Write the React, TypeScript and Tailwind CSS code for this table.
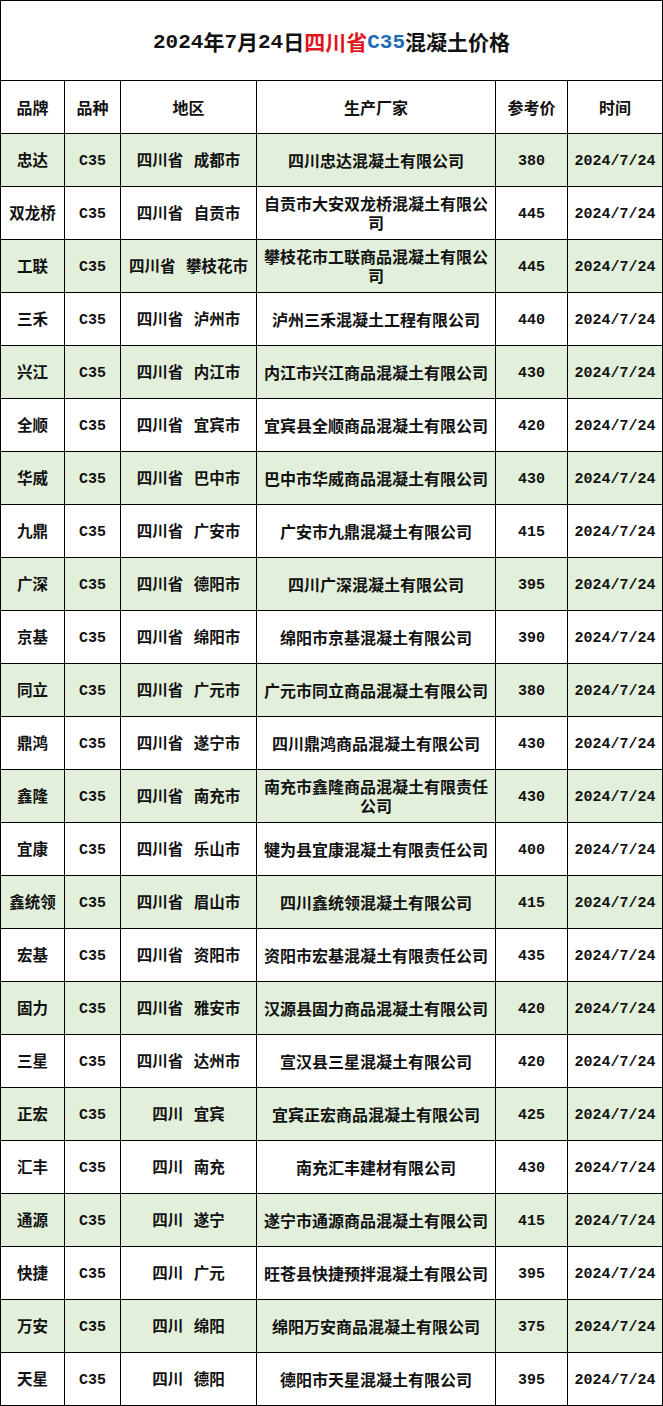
import React from "react";

type Row = [string, string, string, string];

const rows: Row[] = [
  ["忠达", "四川省 成都市", "四川忠达混凝土有限公司", "380"],
  ["双龙桥", "四川省 自贡市", "自贡市大安双龙桥混凝土有限公司", "445"],
  ["工联", "四川省 攀枝花市", "攀枝花市工联商品混凝土有限公司", "445"],
  ["三禾", "四川省 泸州市", "泸州三禾混凝土工程有限公司", "440"],
  ["兴江", "四川省 内江市", "内江市兴江商品混凝土有限公司", "430"],
  ["全顺", "四川省 宜宾市", "宜宾县全顺商品混凝土有限公司", "420"],
  ["华威", "四川省 巴中市", "巴中市华威商品混凝土有限公司", "430"],
  ["九鼎", "四川省 广安市", "广安市九鼎混凝土有限公司", "415"],
  ["广深", "四川省 德阳市", "四川广深混凝土有限公司", "395"],
  ["京基", "四川省 绵阳市", "绵阳市京基混凝土有限公司", "390"],
  ["同立", "四川省 广元市", "广元市同立商品混凝土有限公司", "380"],
  ["鼎鸿", "四川省 遂宁市", "四川鼎鸿商品混凝土有限公司", "430"],
  ["鑫隆", "四川省 南充市", "南充市鑫隆商品混凝土有限责任公司", "430"],
  ["宜康", "四川省 乐山市", "犍为县宜康混凝土有限责任公司", "400"],
  ["鑫统领", "四川省 眉山市", "四川鑫统领混凝土有限公司", "415"],
  ["宏基", "四川省 资阳市", "资阳市宏基混凝土有限责任公司", "435"],
  ["固力", "四川省 雅安市", "汉源县固力商品混凝土有限公司", "420"],
  ["三星", "四川省 达州市", "宣汉县三星混凝土有限公司", "420"],
  ["正宏", "四川 宜宾", "宜宾正宏商品混凝土有限公司", "425"],
  ["汇丰", "四川 南充", "南充汇丰建材有限公司", "430"],
  ["通源", "四川 遂宁", "遂宁市通源商品混凝土有限公司", "415"],
  ["快捷", "四川 广元", "旺苍县快捷预拌混凝土有限公司", "395"],
  ["万安", "四川 绵阳", "绵阳万安商品混凝土有限公司", "375"],
  ["天星", "四川 德阳", "德阳市天星混凝土有限公司", "395"],
];

const cjk = "font-['Noto_Sans_CJK_SC',sans-serif] font-bold text-[#111]";
const mono = "font-['Liberation_Mono',monospace] font-bold text-[15px] text-[#111] pt-[5px]";
const cell = "border-r border-b border-black flex items-center justify-center text-center h-[53px]";

export default function App() {
  return (
    <div className="w-[663px] min-h-[1406px] bg-white">
      <div className="border-t border-l border-black w-[663px]">
        <div className="h-[80px] border-r border-b border-black flex items-center justify-center font-bold text-[21px] text-[#111] pt-[2px]">
          <span className="font-['Liberation_Mono',monospace] pt-[3px]">2024</span>
          <span className="font-['Noto_Sans_CJK_SC',sans-serif]">年</span>
          <span className="font-['Liberation_Mono',monospace] pt-[3px]">7</span>
          <span className="font-['Noto_Sans_CJK_SC',sans-serif]">月</span>
          <span className="font-['Liberation_Mono',monospace] pt-[3px]">24</span>
          <span className="font-['Noto_Sans_CJK_SC',sans-serif]">日</span>
          <span className="font-['Noto_Sans_CJK_SC',sans-serif] text-[#e3141c]">四川省</span>
          <span className="font-['Liberation_Mono',monospace] text-[#1b6cb5] pt-[3px]">C35</span>
          <span className="font-['Noto_Sans_CJK_SC',sans-serif]">混凝土价格</span>
        </div>
        <div className="grid grid-cols-[64px_56px_136px_239px_72px_95px]">
          {["品牌", "品种", "地区", "生产厂家", "参考价", "时间"].map((h) => (
            <div key={h} className={`${cell} ${cjk} text-[16px] bg-white`}>
              {h}
            </div>
          ))}
          {rows.map((r, i) => {
            const bg = i % 2 === 0 ? "bg-[#e2efda]" : "bg-white";
            return (
              <React.Fragment key={i}>
                <div className={`${cell} ${bg} ${cjk} text-[15.5px]`}>{r[0]}</div>
                <div className={`${cell} ${bg} ${mono}`}>C35</div>
                <div className={`${cell} ${bg} ${cjk} text-[15.5px] [word-spacing:7px]`}>{r[1]}</div>
                <div className={`${cell} ${bg} ${cjk} text-[16px] leading-[19px]`}>{r[2]}</div>
                <div className={`${cell} ${bg} ${mono}`}>{r[3]}</div>
                <div className={`${cell} ${bg} ${mono}`}>2024/7/24</div>
              </React.Fragment>
            );
          })}
        </div>
      </div>
    </div>
  );
}
